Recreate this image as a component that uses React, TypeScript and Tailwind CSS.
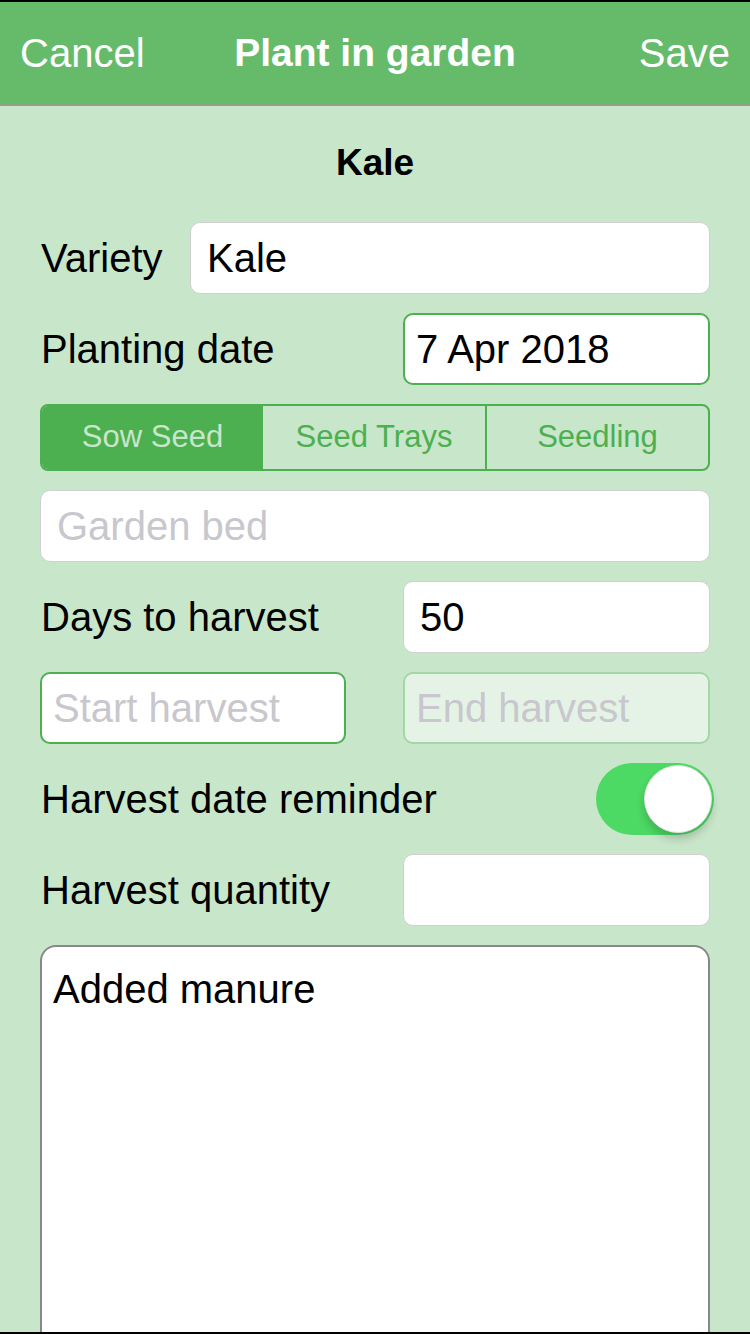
import React from "react";

const font = { fontFamily: '"Liberation Sans", Arial, sans-serif' };

const Field: React.FC<{ value?: string; placeholder?: string; className?: string }> = ({
  value,
  placeholder,
  className = "",
}) => (
  <div className={`h-[72px] rounded-[10px] flex items-center text-[40px] ${className}`}>
    {value ? <span className="text-black">{value}</span> : <span className="text-[#c7c7cd]">{placeholder}</span>}
  </div>
);

const App: React.FC = () => {
  return (
    <div style={font} className="w-[750px] h-[1334px] overflow-hidden flex flex-col bg-[#c8e6c9]">
      {/* Nav bar */}
      <div className="h-[2px] bg-black flex-none" />
      <div className="h-[102px] flex-none bg-[#66bb6a] grid grid-cols-[1fr_auto_1fr] items-center px-[20px] text-white text-[40px]">
        <span>Cancel</span>
        <span className="font-bold text-[39px]">Plant in garden</span>
        <span className="text-right">Save</span>
      </div>
      <div className="h-[2px] bg-[#8fa08f] flex-none" />

      <div className="flex-1 flex flex-col px-[40px] pt-[37px] min-h-0">
        <div className="h-[40px] flex items-center justify-center text-[37px] font-bold text-black mb-[39px]">Kale</div>

        <div className="flex flex-col gap-[19px]">
          <div className="flex items-center">
            <span className="text-[40px] text-black w-[150px] pl-[1px]">Variety</span>
            <Field value="Kale" className="flex-1 bg-white border border-[#d0d0d0] pl-[16px]" />
          </div>

          <div className="flex items-center justify-between">
            <span className="text-[40px] text-black pl-[1px]">Planting date</span>
            <Field value="7 Apr 2018" className="w-[307px] bg-white border-2 border-[#4caf50] pl-[11px]" />
          </div>

          <div className="h-[67px] flex rounded-[8px] border-2 border-[#4caf50] overflow-hidden text-[31px]">
            <div className="w-[221px] bg-[#4caf50] text-[#c8e6c9] flex items-center justify-center">Sow Seed</div>
            <div className="w-[224px] border-r-2 border-[#4caf50] text-[#4caf50] flex items-center justify-center">Seed Trays</div>
            <div className="flex-1 text-[#4caf50] flex items-center justify-center">Seedling</div>
          </div>

          <Field placeholder="Garden bed" className="bg-white border border-[#d0d0d0] pl-[16px]" />

          <div className="flex items-center justify-between">
            <span className="text-[40px] text-black pl-[1px]">Days to harvest</span>
            <Field value="50" className="w-[307px] bg-white border border-[#d0d0d0] pl-[16px]" />
          </div>

          <div className="flex items-center justify-between">
            <Field placeholder="Start harvest" className="w-[306px] bg-white border-2 border-[#4caf50] pl-[11px]" />
            <Field placeholder="End harvest" className="w-[307px] bg-[#e5f3e6] border-2 border-[#a5d6a7] pl-[11px]" />
          </div>

          <div className="flex items-center justify-between h-[72px]">
            <span className="text-[40px] text-black pl-[1px]">Harvest date reminder</span>
            <div className="w-[118px] h-[72px] rounded-full bg-[#4cd964] flex items-center justify-end pr-[2px] mr-[-4px]">
              <div className="w-[68px] h-[68px] rounded-full bg-white border border-[#e0e0e0] shadow-[0_6px_8px_rgba(0,0,0,0.18)]" />
            </div>
          </div>

          <div className="flex items-center justify-between">
            <span className="text-[40px] text-black pl-[1px]">Harvest quantity</span>
            <Field className="w-[307px] bg-white border border-[#d0d0d0]" />
          </div>
        </div>

        <div className="flex-1 mt-[19px] bg-white border-2 border-b-0 border-[#888888] rounded-t-[16px] pl-[11px] pt-[12px]">
          <span className="text-[40px] text-black">Added manure</span>
        </div>
      </div>
      <div className="h-[2px] bg-black flex-none" />
    </div>
  );
};

export default App;
